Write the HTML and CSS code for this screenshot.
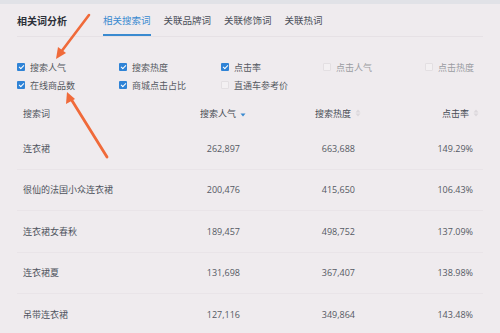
FILE: index.html
```html
<!DOCTYPE html>
<html lang="zh-CN">

<head>
    <meta charset="UTF-8">
    <meta name="viewport" content="width=device-width, initial-scale=1.0">
    <title>相关词分析</title>
    <link rel="stylesheet" href="styles.css">
</head>

<body>

    <div class="topbar"></div>

    <div class="panel">
        <div class="header">
            <h1 class="title">相关词分析</h1>
            <div class="tabs">
                <span class="tab active">相关搜索词</span>
                <span class="tab">关联品牌词</span>
                <span class="tab">关联修饰词</span>
                <span class="tab">关联热词</span>
            </div>
        </div>

        <div class="filters">
            <label class="check on"><i class="box"></i>搜索人气</label>
            <label class="check on"><i class="box"></i>搜索热度</label>
            <label class="check on"><i class="box"></i>点击率</label>
            <label class="check faint"><i class="box"></i>点击人气</label>
            <label class="check faint"><i class="box"></i>点击热度</label>
            <label class="check on"><i class="box"></i>在线商品数</label>
            <label class="check on"><i class="box"></i>商城点击占比</label>
            <label class="check"><i class="box"></i>直通车参考价</label>
        </div>

        <div class="table">
            <div class="row head">
                <div class="cell word">搜索词</div>
                <div class="cell num">搜索人气
                    <svg class="sort" viewBox="0 0 6 8"><path d="M0.5 4.5h5L3 7.5z" fill="#3a8ad0"/></svg>
                </div>
                <div class="cell num">搜索热度
                    <svg class="sort" viewBox="0 0 6 8"><path d="M0.5 3.5h5L3 0.5zM0.5 4.5h5L3 7.5z" fill="#dcd8dc"/></svg>
                </div>
                <div class="cell num">点击率
                    <svg class="sort" viewBox="0 0 6 8"><path d="M0.5 3.5h5L3 0.5zM0.5 4.5h5L3 7.5z" fill="#dcd8dc"/></svg>
                </div>
            </div>
            <div class="row">
                <div class="cell word">连衣裙</div>
                <div class="cell val">262,897</div>
                <div class="cell val">663,688</div>
                <div class="cell val">149.29%</div>
            </div>
            <div class="row">
                <div class="cell word">很仙的法国小众连衣裙</div>
                <div class="cell val">200,476</div>
                <div class="cell val">415,650</div>
                <div class="cell val">106.43%</div>
            </div>
            <div class="row">
                <div class="cell word">连衣裙女春秋</div>
                <div class="cell val">189,457</div>
                <div class="cell val">498,752</div>
                <div class="cell val">137.09%</div>
            </div>
            <div class="row">
                <div class="cell word">连衣裙夏</div>
                <div class="cell val">131,698</div>
                <div class="cell val">367,407</div>
                <div class="cell val">138.98%</div>
            </div>
            <div class="row">
                <div class="cell word">吊带连衣裙</div>
                <div class="cell val">127,116</div>
                <div class="cell val">349,864</div>
                <div class="cell val">143.48%</div>
            </div>
        </div>
    </div>

    <!-- annotation arrows drawn over the screenshot -->
    <svg class="arrows" viewBox="0 0 500 333">
        <path d="M89 15L61 52" stroke="#f06a3a" stroke-width="2.6" stroke-linecap="round"/>
        <path d="M56 59L58 47L66 53z" fill="#f06a3a"/>
        <path d="M107 157L71 99" stroke="#f06a3a" stroke-width="2.8" stroke-linecap="round"/>
        <path d="M67 92L66 104L75 99z" fill="#f06a3a"/>
    </svg>

</body>

</html>
```

FILE: styles.css
```css
body {
    margin: 0;
    background-color: #efebee;
    font-family: "Noto Sans CJK SC", "Liberation Sans", sans-serif;
    color: #4a4e58;
    position: relative;
    width: 500px;
    height: 333px;
    overflow: hidden;
}

.topbar {
    height: 4px;
    background-color: #e1e2e7;
}

.panel {
    padding: 0 17px;
}

.header {
    display: flex;
    align-items: center;
    height: 32px;
    border-bottom: 1px solid #e6e1e5;
}

.title {
    margin: 0;
    width: 86px;
    font-size: 10px;
    font-weight: bold;
    color: #2b2f38;
}

.tabs {
    display: flex;
    gap: 13px;
    height: 100%;
}

.tab {
    display: flex;
    align-items: center;
    font-size: 9.5px;
    color: #4b4f59;
    border-bottom: 2px solid transparent;
    box-sizing: border-box;
    padding-top: 1px;
}

.tab.active {
    color: #3a8ad0;
    border-bottom-color: #3a8ad0;
}

.filters {
    display: grid;
    grid-template-columns: repeat(4, 102px) 1fr;
    grid-auto-rows: 18px;
    padding-top: 21px;
}

.check {
    display: flex;
    align-items: center;
    font-size: 9px;
    color: #555961;
}

.check.faint {
    color: #9a9ca2;
}

.box {
    position: relative;
    width: 8px;
    height: 8px;
    margin-right: 5px;
    border-radius: 1px;
    box-sizing: border-box;
    border: 1px solid #e3dfe2;
    background-color: #f3f0f2;
}

.check.on .box {
    border: none;
    background-color: #2f83d6;
}

/* white tick inside a checked box */
.check.on .box::after {
    content: "";
    position: absolute;
    left: 2.5px;
    top: 1px;
    width: 2px;
    height: 4px;
    border: solid #fff;
    border-width: 0 1.2px 1.2px 0;
    transform: rotate(45deg);
}

.table {
    margin-top: 4px;
    width: 466px;
}

.row {
    display: grid;
    grid-template-columns: 118px 115px 115px 118px;
    height: 41.5px;
    align-items: center;
    border-bottom: 1px solid #e9e4e8;
    box-sizing: border-box;
}

.row.head {
    height: 30px;
    border-bottom: none;
}

.cell {
    font-size: 9px;
}

.word {
    padding-left: 6px;
    color: #4e535d;
}

.num {
    display: flex;
    justify-content: flex-end;
    align-items: center;
    gap: 4px;
    color: #474b55;
    padding-right: 4px;
}

.val {
    text-align: right;
    padding-right: 10px;
    font-family: "Open Sans", "Liberation Sans", sans-serif;
    color: #555963;
}

.sort {
    width: 6px;
    height: 8px;
}

.arrows {
    position: absolute;
    left: 0;
    top: 0;
    width: 500px;
    height: 333px;
    pointer-events: none;
}
```
